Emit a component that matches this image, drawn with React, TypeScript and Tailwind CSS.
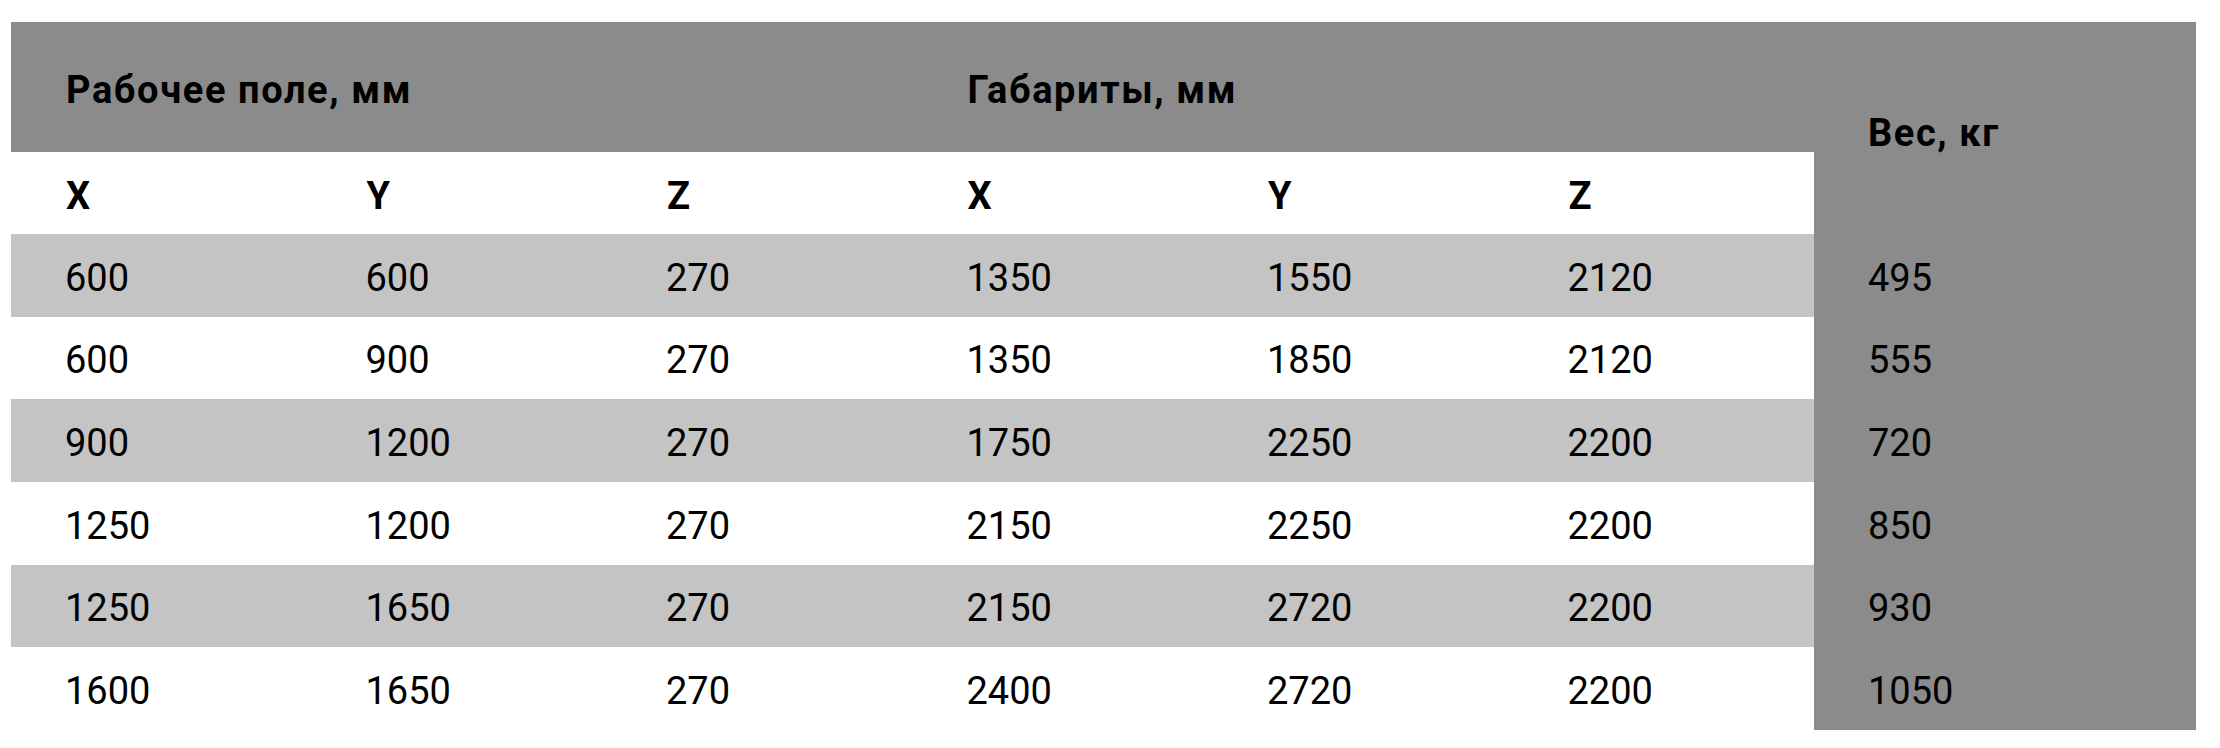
import React from "react";

const rows = [
  ["600", "600", "270", "1350", "1550", "2120", "495"],
  ["600", "900", "270", "1350", "1850", "2120", "555"],
  ["900", "1200", "270", "1750", "2250", "2200", "720"],
  ["1250", "1200", "270", "2150", "2250", "2200", "850"],
  ["1250", "1650", "270", "2150", "2720", "2200", "930"],
  ["1600", "1650", "270", "2400", "2720", "2200", "1050"],
];

export default function App() {
  return (
    <div
      className="w-[2220px] h-[748px] bg-white pt-[22px] pl-[11px] text-black"
      style={{ fontFamily: "Roboto, 'Liberation Sans', sans-serif" }}
    >
      <div className="grid grid-cols-[repeat(6,300.5px)_382px] grid-rows-[130px_82px_repeat(6,82.67px)] w-[2185px]">
        <div className="col-span-3 bg-[#8a8b8a] flex items-center pl-[55px] pt-[6px] text-[38px] font-bold leading-none tracking-[1.6px]">
          Рабочее поле, мм
        </div>
        <div className="col-span-3 bg-[#8a8b8a] flex items-center pl-[55px] pt-[6px] text-[38px] font-bold leading-none tracking-[1.6px]">
          Габариты, мм
        </div>
        <div className="row-span-2 bg-[#8a8b8a] flex items-center pl-[54px] pt-[10px] text-[38px] font-bold leading-none tracking-[1.6px]">
          Вес, кг
        </div>
        {["X", "Y", "Z", "X", "Y", "Z"].map((l, i) => (
          <div
            key={i}
            className="bg-white flex items-center pl-[55px] pt-[6px] text-[38px] font-bold leading-none"
          >
            {l}
          </div>
        ))}
        {rows.map((r, ri) =>
          r.map((v, ci) => {
            const isWeight = ci === 6;
            const bg = isWeight
              ? "bg-[#8a8b8a]"
              : ri % 2 === 0
              ? "bg-[#c4c4c4]"
              : "bg-white";
            return (
              <div
                key={`${ri}-${ci}`}
                className={`${bg} flex items-center pl-[54px] pt-[5px] text-[38px] font-normal leading-none`}
              >
                {v}
              </div>
            );
          })
        )}
      </div>
    </div>
  );
}
